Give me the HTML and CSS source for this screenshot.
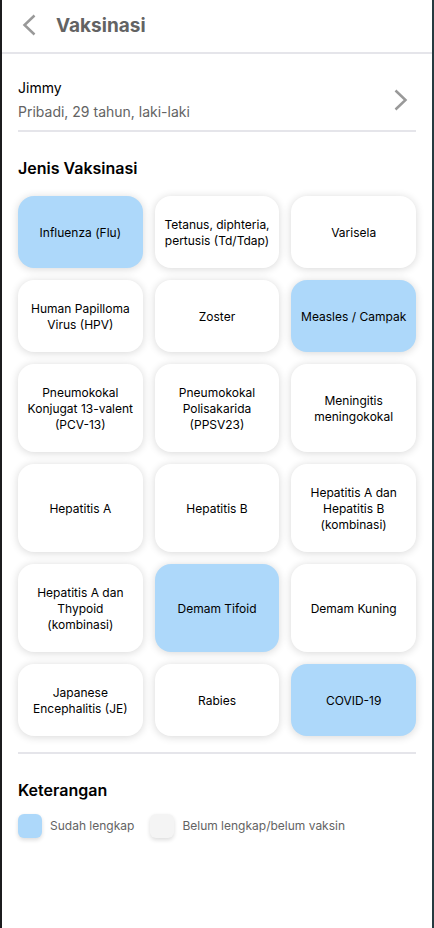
FILE: index.html
```html
<!DOCTYPE html>
<html lang="id">
<head>
<meta charset="utf-8">
<meta name="viewport" content="width=device-width, initial-scale=1">
<title>Vaksinasi</title>
<link rel="stylesheet" href="styles.css">
</head>
<body>
<header class="topbar">
  <button class="back" type="button" aria-label="Kembali">
    <svg width="24" height="24" viewBox="0 0 24 24" fill="none" stroke="currentColor" stroke-width="2.5"><path d="M18.500 2.500 8.500 12l10 9.500"/></svg>
  </button>
  <h1 class="title">Vaksinasi</h1>
</header>
<main class="content">
  <button class="profile" type="button">
    <span class="profile-text">
      <span class="name">Jimmy</span>
      <span class="detail">Pribadi, 29 tahun, laki-laki</span>
    </span>
    <svg class="chevron" width="24" height="24" viewBox="0 0 24 24" fill="none" stroke="currentColor" stroke-width="2.500"><path d="M3.500 2.500 13.500 12l-10 9.500"/></svg>
  </button>

  <section class="vaccines">
    <h2 class="heading">Jenis Vaksinasi</h2>
    <div class="grid">
      <button type="button" class="card done">Influenza (Flu)</button>
      <button type="button" class="card">Tetanus, diphteria, pertusis (Td/Tdap)</button>
      <button type="button" class="card">Varisela</button>
      <button type="button" class="card">Human Papilloma Virus (HPV)</button>
      <button type="button" class="card">Zoster</button>
      <button type="button" class="card done">Measles / Campak</button>
      <button type="button" class="card">Pneumokokal Konjugat 13-valent (PCV-13)</button>
      <button type="button" class="card">Pneumokokal Polisakarida (PPSV23)</button>
      <button type="button" class="card">Meningitis meningokokal</button>
      <button type="button" class="card">Hepatitis A</button>
      <button type="button" class="card">Hepatitis B</button>
      <button type="button" class="card">Hepatitis A dan Hepatitis B (kombinasi)</button>
      <button type="button" class="card">Hepatitis A dan Thypoid (kombinasi)</button>
      <button type="button" class="card done">Demam Tifoid</button>
      <button type="button" class="card">Demam Kuning</button>
      <button type="button" class="card">Japanese Encephalitis (JE)</button>
      <button type="button" class="card">Rabies</button>
      <button type="button" class="card done">COVID-19</button>
    </div>
  </section>

  <section class="legend">
    <h2 class="heading">Keterangan</h2>
    <ul class="legend-list">
      <li class="legend-item"><span class="swatch done"></span>Sudah lengkap</li>
      <li class="legend-item"><span class="swatch"></span>Belum lengkap/belum vaksin</li>
    </ul>
  </section>
</main>
</body>
</html>
```

FILE: styles.css
```css
* {
  box-sizing: border-box;
}

body {
  margin: 0;
  min-height: 100vh;
  border-left: 2px solid #1c1c1e;
  border-right: 2px solid #263a40;
  background: #fff;
  color: #000;
  font-family: Inter, "Liberation Sans", sans-serif;
}

button {
  margin: 0;
  border: 0;
  background: none;
  color: inherit;
  font-family: inherit;
  cursor: pointer;
}

h1,
h2,
ul {
  margin: 0;
  padding: 0;
}

svg {
  display: block;
}

.topbar {
  display: flex;
  align-items: center;
  gap: 16px;
  padding: 12px 16px 12px 14px;
  border-bottom: 2px solid #e5e5ea;
}

.back {
  padding: 1px 0 3px;
  color: #999;
}

.title {
  color: #636363;
  font-size: 19px;
  font-weight: 700;
  line-height: 28px;
}

.content {
  padding: 22px 16px;
}

.profile {
  display: flex;
  align-items: center;
  justify-content: space-between;
  width: 100%;
  padding: 0 0 6px;
  border-bottom: 2px solid #e5e5ea;
  font-size: 14px;
  line-height: 24px;
  text-align: left;
}

.profile-text {
  display: flex;
  flex-direction: column;
}

.detail {
  color: #636363;
}

.chevron {
  color: #999;
}

.heading {
  font-size: 16px;
  font-weight: 600;
  line-height: 24px;
}

.vaccines {
  padding: 24px 0 16px;
  border-bottom: 2px solid #e5e5ea;
}

.grid {
  display: grid;
  grid-template-columns: repeat(3, 1fr);
  gap: 12px;
  margin-top: 16px;
}

.card {
  min-height: 72px;
  padding: 21px 8px 19px;
  border-radius: 16px;
  background: #fff;
  box-shadow: 0 1px 8px rgba(0, 0, 0, 0.16);
  font-size: 12px;
  line-height: 16px;
  text-align: center;
}

.legend {
  padding-top: 24px;
}

.legend-list {
  display: flex;
  flex-wrap: wrap;
  gap: 16px;
  margin-top: 12px;
  list-style: none;
}

.legend-item {
  display: flex;
  align-items: center;
  gap: 8px;
  color: #636363;
  font-size: 12px;
  line-height: 16px;
}

.swatch {
  width: 24px;
  height: 24px;
  border-radius: 6px;
  background: #f4f4f4;
  box-shadow: 0 2px 4px rgba(0, 0, 0, 0.14);
}

.done {
  background: #add8fa;
}
```
